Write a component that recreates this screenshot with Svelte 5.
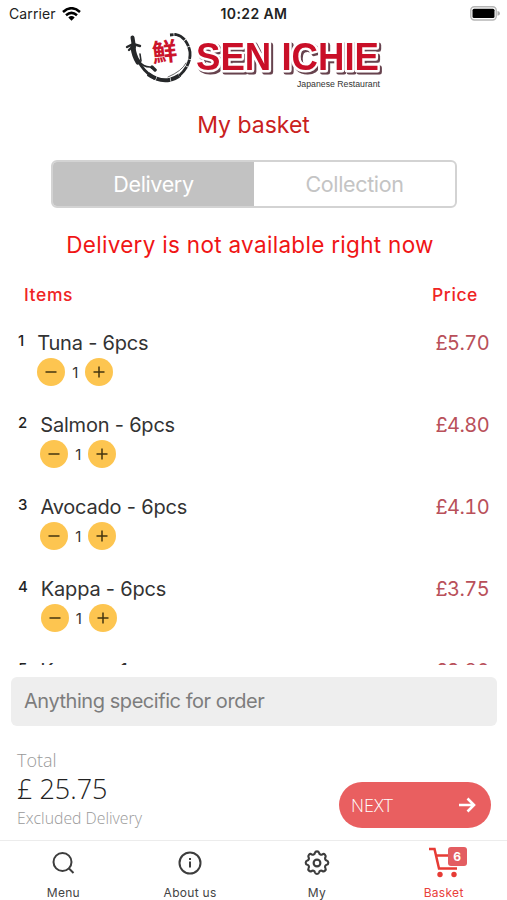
<script>
	let mode = "Delivery";
	let note = "";
	let items = [
		{ id: 1, name: "Tuna - 6pcs", price: "5.70", qty: 1 },
		{ id: 2, name: "Salmon - 6pcs", price: "4.80", qty: 1 },
		{ id: 3, name: "Avocado - 6pcs", price: "4.10", qty: 1 },
		{ id: 4, name: "Kappa - 6pcs", price: "3.75", qty: 1 },
		{ id: 5, name: "Kappa - 1pcs", price: "3.80", qty: 1 },
	];
	let tabs = ["Menu", "About us", "My", "Basket"];
	let active = "Basket";

	function change(item, step) {
		item.qty = Math.max(0, item.qty + step);
		items = items;
	}
</script>

<div class="screen">
	<div class="status">
		<div class="carrier">
			<span>Carrier</span>
			<svg width="19" height="14" viewBox="0 0 19 14">
				<g fill="none" stroke="#000" stroke-width="2.5">
					<path d="M1 5Q9.500-2.600 18 5" />
					<path d="M4 8.300Q9.500 3.400 15 8.300" />
				</g>
				<path d="M6.300 10.400Q9.500 7.700 12.700 10.400L9.500 13.700Z" />
			</svg>
		</div>
		<b>10:22 AM</b>
		<svg class="battery" width="31" height="15" viewBox="0 0 31 15">
			<rect x=".8" y=".8" width="25.400" height="13.200" rx="3.500" fill="#fff" stroke="#b5b5b5" stroke-width="1.400" />
			<rect x="2.500" y="2.700" width="22" height="9.400" rx="1.500" />
			<path d="M27.500 5Q30 5.500 30 7.400T27.500 9.800Z" fill="#aaa" />
		</svg>
	</div>

	<svg class="logo" width="264" height="64" viewBox="0 0 264 64">
		<g fill="none" stroke="#26282a" stroke-linecap="round" stroke-linejoin="round">
			<path d="M9 20Q10 29 14 35" stroke-width="5" />
			<path d="M8.500 10.500L10 20" stroke-width="4" />
			<path d="M3 20L9 17L16 19M9 19L5 23" stroke-width="2.400" />
			<path d="M14 33Q19 44 30 51" stroke-width="3" />
			<path d="M16 27L17 34M15 34Q19 40 26 40L32 43" stroke-width="1.600" />
			<path d="M28 40L31 43" stroke-width="3.200" />
			<path d="M24 47Q41 59 56 48" stroke-width="4" stroke-dasharray="9 .6 14 .6" stroke-linecap="butt" />
			<path d="M55 49Q67 38 66 25Q63 10 52 7.500L46 8" stroke-width="2.800" stroke-dasharray="12 .7 7 .7" stroke-linecap="butt" />
			<path d="M62 36Q58 44 44 50" stroke-width=".7" />
		</g>
		<text class="kanji" x="28" y="34" transform="rotate(-6 40 24)">鮮</text>
		<text class="brand" x="72" y="42.500" textLength="183" lengthAdjust="spacingAndGlyphs">SEN ICHIE</text>
		<text class="tagline" x="173" y="60" textLength="83" lengthAdjust="spacingAndGlyphs">Japanese Restaurant</text>
	</svg>

	<h1>My basket</h1>

	<div class="switch">
		{#each ["Delivery", "Collection"] as option}
			<button class:selected={mode === option} on:click={() => (mode = option)}>{option}</button>
		{/each}
	</div>

	<p class="warning">Delivery is not available right now</p>

	<div class="heads"><span>Items</span><span>Price</span></div>

	<ul>
		{#each items as item (item.id)}
			<li>
				<span class="num">{item.id}</span>
				<div class="info">
					<span class="name">{item.name}</span>
					<div class="qty">
						<button aria-label="Less" on:click={() => change(item, -1)}>
							<svg width="12" height="12" viewBox="0 0 12 12"><path d="M.5 6h11" /></svg>
						</button>
						<span>{item.qty}</span>
						<button aria-label="More" on:click={() => change(item, 1)}>
							<svg width="12" height="12" viewBox="0 0 12 12"><path d="M.5 6h11M6 .5v11" /></svg>
						</button>
					</div>
				</div>
				<span class="price">£{item.price}</span>
			</li>
		{/each}
	</ul>

	<input bind:value={note} placeholder="Anything specific for order" />

	<div class="checkout">
		<div class="total">
			<span>Total</span>
			<strong>£ 25.75</strong>
			<small>Excluded Delivery</small>
		</div>
		<button class="next">
			<span>NEXT</span>
			<svg width="18" height="16" viewBox="0 0 18 16"><path d="M1 8h15M9.500 1.500L16 8l-6.500 6.500" /></svg>
		</button>
	</div>

	<nav>
		{#each tabs as tab}
			<button class:active={active === tab} on:click={() => (active = tab)}>
				{#if tab === "Menu"}
					<svg width="26" height="26" viewBox="0 0 26 26"><circle cx="12.500" cy="12" r="9" /><path d="M18.500 18L23.500 23" /></svg>
				{:else if tab === "About us"}
					<svg width="26" height="26" viewBox="0 0 26 26"><circle cx="13" cy="13" r="10.500" /><path d="M13 11.500v6M13 8v2" /></svg>
				{:else if tab === "My"}
					<svg width="26" height="26" viewBox="1.600 1.900 20.800 20.800">
						<circle cx="12" cy="12.300" r="2.700" stroke-width="1.700" />
						<path stroke-width="1.700" d="M10.300 4.300c.5-1.800 2.900-1.800 3.400 0a1.700 1.700 0 0 0 2.600 1.100c1.500-1 3.300.8 2.400 2.400a1.700 1.700 0 0 0 1 2.500c1.800.5 1.800 2.900 0 3.400a1.700 1.700 0 0 0-1 2.600c.9 1.500-.9 3.300-2.400 2.400a1.700 1.700 0 0 0-2.600 1c-.5 1.800-2.900 1.800-3.400 0a1.700 1.700 0 0 0-2.600-1c-1.500.9-3.300-.9-2.400-2.400a1.700 1.700 0 0 0-1-2.600c-1.800-.5-1.800-2.900 0-3.400a1.700 1.700 0 0 0 1-2.500c-.9-1.600.9-3.400 2.400-2.400a1.700 1.700 0 0 0 2.600-1.100z" />
					</svg>
				{:else}
					<div class="cart">
						<svg width="32" height="32" viewBox="0 0 32 32">
							<path d="M1 3h5.500L11 22.500h18M8 9.500h19V17" />
							<circle class="wheel" cx="12" cy="28.500" r="2.700" />
							<circle class="wheel" cx="26" cy="28.500" r="2.700" />
						</svg>
						<i>6</i>
					</div>
				{/if}
				<span>{tab}</span>
			</button>
		{/each}
	</nav>
</div>

<style>
	:global(body) {
		background: #fff;
	}
	* {
		box-sizing: border-box;
	}
	button {
		border: none;
		padding: 0;
		background: none;
		font: inherit;
		color: inherit;
		cursor: pointer;
	}
	.screen {
		display: flex;
		flex-direction: column;
		width: 507px;
		height: 900px;
		overflow: hidden;
		background: #fff;
		color: #333;
		font-family: Inter, "Liberation Sans", sans-serif;
	}
	.status {
		display: grid;
		grid-template-columns: 1fr auto 1fr;
		align-items: center;
		height: 27px;
		padding: 0 6px 0 9px;
		color: #222;
		font-size: 14px;
		flex-shrink: 0;
	}
	.carrier {
		display: flex;
		align-items: center;
		gap: 6px;
		letter-spacing: 0.1px;
	}
	.status b {
		margin-right: 2px;
		font-weight: 600;
		letter-spacing: 0.4px;
	}
	.battery {
		justify-self: end;
	}
	.logo {
		display: block;
		flex-shrink: 0;
		margin: 0 0 0 124px;
	}
	.kanji {
		font: 700 25px "Noto Sans CJK JP", sans-serif;
		fill: #cb142b;
	}
	.brand {
		font: 700 38px "Liberation Sans", sans-serif;
		fill: #c90f28;
		stroke: #fff;
		stroke-width: 5px;
		stroke-linejoin: round;
		paint-order: stroke;
		filter: drop-shadow(2px 2.5px 0 #67434e);
	}
	.tagline {
		font: 8.5px "Liberation Sans", sans-serif;
		fill: #333;
	}
	h1 {
		margin: 19px 0 0;
		color: #c92020;
		font-size: 23px;
		font-weight: 400;
		line-height: 30px;
		text-align: center;
	}
	.switch {
		display: flex;
		flex-shrink: 0;
		width: 406px;
		height: 48px;
		margin: 20px 0 0 51px;
		overflow: hidden;
		border: 2px solid #d3d3d3;
		border-radius: 6px;
	}
	.switch button {
		flex: 1;
		color: #c4c4c4;
		font-size: 21.5px;
		letter-spacing: -0.35px;
	}
	.switch .selected {
		background: #c2c2c2;
		color: #fff;
	}
	.warning {
		margin: 22px 0 0;
		padding-right: 7px;
		color: #f01515;
		font-size: 22.5px;
		line-height: 30px;
		letter-spacing: 0.3px;
		text-align: center;
	}
	.heads {
		display: flex;
		justify-content: space-between;
		margin-top: 25px;
		padding: 0 29px 0 24px;
		color: #ef2424;
		font-size: 17.5px;
		font-weight: 500;
		line-height: 20px;
		letter-spacing: 0.6px;
	}
	ul {
		flex: 1;
		min-height: 0;
		margin: 12px 0 0;
		padding: 13px 18px 0 18px;
		overflow: hidden;
		list-style: none;
	}
	li {
		display: flex;
		height: 82px;
	}
	.num {
		margin-right: 13px;
		color: #222;
		font-size: 15px;
		font-weight: 500;
		line-height: 22px;
	}
	.info {
		flex: 1;
	}
	.name {
		display: block;
		font-size: 20px;
		line-height: 26px;
		letter-spacing: -0.2px;
	}
	.qty {
		display: flex;
		align-items: center;
		margin-top: 2px;
	}
	.qty button {
		display: flex;
		align-items: center;
		justify-content: center;
		width: 28px;
		height: 28px;
		border-radius: 50%;
		background: #fdc550;
	}
	.qty path {
		stroke: #43350f;
		stroke-width: 1.5;
	}
	.qty span {
		width: 20px;
		font-size: 15px;
		text-align: center;
	}
	.price {
		color: #b9505a;
		font-size: 20px;
		font-variant-numeric: tabular-nums;
		line-height: 26px;
		letter-spacing: -0.6px;
	}
	input {
		flex-shrink: 0;
		height: 49px;
		margin: 12px 10px 0 11px;
		padding: 0 13px 2px;
		border: none;
		border-radius: 6px;
		background: #eee;
		font: 20px Inter, sans-serif;
		letter-spacing: -0.45px;
	}
	input::placeholder {
		color: #7d7d7d;
		opacity: 1;
	}
	.checkout {
		display: flex;
		flex-shrink: 0;
		justify-content: space-between;
		height: 114px;
		padding: 22px 16px 0 17px;
		font-family: "Open Sans", sans-serif;
		font-weight: 300;
	}
	.total {
		display: flex;
		flex-direction: column;
		color: #999;
	}
	.total span {
		font-size: 18px;
		line-height: 25px;
	}
	.total strong {
		color: #222;
		font-size: 27px;
		font-weight: 300;
		line-height: 32px;
	}
	.total small {
		font-size: 15.8px;
		line-height: 27px;
	}
	.next {
		display: flex;
		align-items: center;
		justify-content: space-between;
		width: 152px;
		height: 46px;
		margin-top: 34px;
		padding: 0 15px 0 12px;
		border-radius: 23px;
		background: #e95f60;
		color: #fff;
		font-size: 18px;
	}
	.next path {
		fill: none;
		stroke: #fff;
		stroke-width: 2.6;
	}
	nav {
		display: grid;
		grid-template-columns: repeat(4, 1fr);
		flex-shrink: 0;
		height: 60px;
		border-top: 1px solid #ececec;
	}
	nav button {
		display: flex;
		flex-direction: column;
		align-items: center;
		padding-top: 9px;
		color: #444;
		font-size: 12px;
		letter-spacing: 0.3px;
	}
	nav svg {
		fill: none;
		stroke: #3d3d3d;
		stroke-width: 2;
	}
	nav span {
		margin-top: 9px;
		line-height: 16px;
	}
	nav .active {
		color: #e9403b;
	}
	.cart {
		position: relative;
		width: 32px;
		height: 26px;
	}
	.cart svg {
		display: block;
		margin-top: -4px;
		stroke: #e63b35;
		stroke-width: 2.5;
	}
	nav .wheel {
		fill: #e63b35;
		stroke: none;
	}
	.cart i {
		position: absolute;
		top: -3px;
		left: 20px;
		width: 19px;
		height: 19px;
		border-radius: 3px;
		background: #e35d61;
		color: #fff;
		font-size: 12px;
		font-style: normal;
		font-weight: 700;
		line-height: 19px;
		letter-spacing: 0;
		text-align: center;
	}
</style>
